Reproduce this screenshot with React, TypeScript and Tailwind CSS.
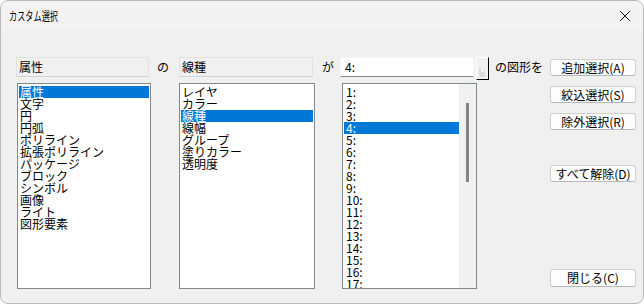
import React from "react";

const F = { fontFamily: '"Noto Sans CJK JP", "Noto Sans", sans-serif' };

function ListBox({ items, sel, w }: { items: string[]; sel: number; w: string }) {
  return (
    <div className={`${w} h-[206px] border border-[#828790] bg-white pt-[2px] px-[1px] overflow-hidden`}>
      {items.map((t, i) => (
        <div
          key={i}
          className={`h-[12px] leading-[12px] text-[12px] pl-[1px] whitespace-nowrap ${
            i === sel ? "bg-[#0078d7] text-white" : "text-black"
          }`}
        >
          {t}
        </div>
      ))}
    </div>
  );
}

function Btn({ children, cls }: { children: React.ReactNode; cls: string }) {
  return (
    <div
      className={`w-[86px] h-[17px] rounded-[3px] border border-[#d0d0d0] border-b-[#b8b8b8] bg-[#fdfdfd] flex items-center justify-center text-[12px] leading-[12px] text-black ${cls}`}
    >
      {children}
    </div>
  );
}

export default function App() {
  const list1 = ["属性", "文字", "円", "円弧", "ポリライン", "拡張ポリライン", "パッケージ", "ブロック", "シンボル", "画像", "ライト", "図形要素"];
  const list2 = ["レイヤ", "カラー", "線種", "線幅", "グループ", "塗りカラー", "透明度"];
  const list3 = Array.from({ length: 17 }, (_, i) => `${i + 1}:`);
  return (
    <div style={F} className="w-[644px] h-[304px] overflow-hidden">
      <div className="w-[644px] h-[304px] rounded-[8px] border border-[#b9b9b9] bg-[#f0f0f0] overflow-hidden flex flex-col">
        <div className="h-[30px] bg-[#f3f3f3] flex items-center justify-between pl-[8px] pr-[12px] shrink-0">
          <span className="inline-block origin-left scale-x-[0.68] text-[12px] leading-[12px] text-black whitespace-nowrap">カスタム選択</span>
          <svg width="12" height="12" viewBox="0 0 12 12">
            <path d="M1 1 L11 11 M11 1 L1 11" stroke="#1a1a1a" strokeWidth="1" />
          </svg>
        </div>
        <div className="flex flex-1">
          <div className="flex flex-col pl-[15px] pt-[26px] w-[548px]">
            <div className="flex items-start h-[23px]">
              <div className="w-[133px] h-[20px] border border-[#e2e2e2] border-b-[#d4d4d4] bg-[#f0f0f0] text-[12px] leading-[18px] pl-[2px]">属性</div>
              <div className="w-[30px] h-[20px] pl-[8px] text-[12px] leading-[20px]">の</div>
              <div className="w-[134px] h-[20px] border border-[#e2e2e2] border-b-[#d4d4d4] bg-[#f0f0f0] text-[12px] leading-[18px] pl-[2px]">線種</div>
              <div className="w-[27px] h-[20px] pl-[9px] text-[12px] leading-[20px]">が</div>
              <div className="w-[134px] h-[20px] border border-[#f7f7f7] border-b-[#8a8a8a] bg-white text-[12px] leading-[18px] pl-[4px]">4:</div>
              <div className="ml-[2px] w-[13px] h-[23px] border border-white border-r-black border-b-black bg-[#f0f0f0] flex items-end justify-center pb-[2px]">
                <svg width="8" height="10" viewBox="0 0 8 10">
                  <path d="M1 1 L1 9 L7 9 M3 5 L3 8 M5 4 L5 8" stroke="#c8c8c8" strokeWidth="1" fill="none" />
                </svg>
              </div>
              <div className="ml-[6px] text-[12px] leading-[20px] whitespace-nowrap">の図形を</div>
            </div>
            <div className="flex mt-[3px] pl-[1px]">
              <ListBox items={list1} sel={0} w="w-[134px]" />
              <div className="w-[28px]" />
              <ListBox items={list2} sel={2} w="w-[136px]" />
              <div className="w-[27px]" />
              <div className="w-[135px] h-[206px] border border-[#828790] bg-white flex overflow-hidden">
                <div className="flex-1 pt-[2px] pl-[1px]">
                  {list3.map((t, i) => (
                    <div
                      key={i}
                      className={`h-[12px] leading-[12px] text-[12px] pl-[2px] ${
                        i === 3 ? "bg-[#0078d7] text-white" : "text-black"
                      }`}
                    >
                      {t}
                    </div>
                  ))}
                </div>
                <div className="w-[17px] bg-[#f0f0f0] pt-[19px] flex justify-center">
                  <div className="w-[3px] h-[79px] bg-[#858585]" />
                </div>
              </div>
            </div>
          </div>
          <div className="flex flex-col pl-[1px]">
            <Btn cls="mt-[28px]">追加選択(A)</Btn>
            <Btn cls="mt-[10px]">絞込選択(S)</Btn>
            <Btn cls="mt-[10px]">除外選択(R)</Btn>
            <Btn cls="mt-[35px]">すべて解除(D)</Btn>
            <Btn cls="mt-[87px] h-[18px]">閉じる(C)</Btn>
          </div>
        </div>
      </div>
    </div>
  );
}
